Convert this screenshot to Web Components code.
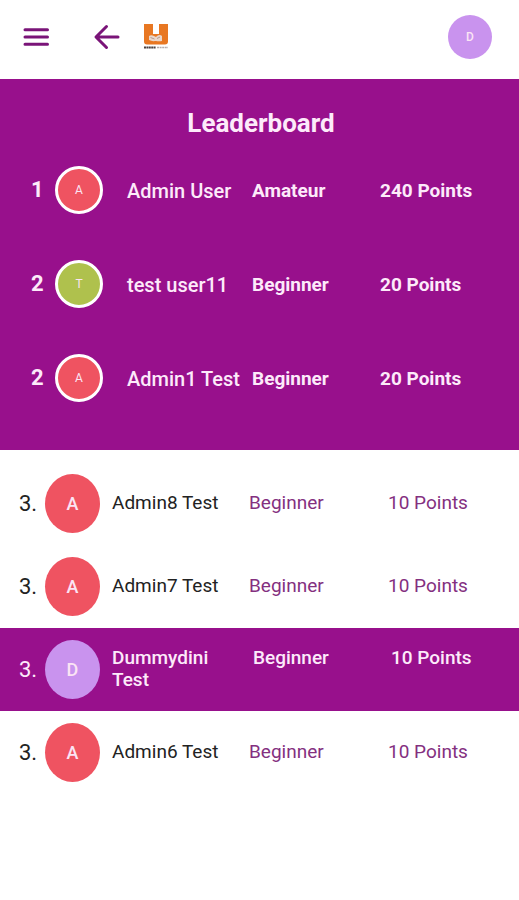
<!DOCTYPE html>
<html lang="en">
<head>
<meta charset="utf-8">
<meta name="viewport" content="width=device-width, initial-scale=1">
<title>Leaderboard</title>
<style>
    :root {
        --lb-primary: #98108c;
        --lb-icon: #7a1478;
        --lb-red: #ef5361;
        --lb-green: #afc14d;
        --lb-lilac: #c993ee;
    }
    body { margin: 0; background: #fff; color: #222; font-family: Roboto, sans-serif; }
</style>
</head>
<body>
<lb-header initial="D"></lb-header>
<main>
    <lb-podium heading="Leaderboard">
        <lb-leader rank="1" initial="A" level="Amateur" points="240">Admin User</lb-leader>
        <lb-leader rank="2" initial="T" color="green" level="Beginner" points="20">test user11</lb-leader>
        <lb-leader rank="2" initial="A" level="Beginner" points="20">Admin1 Test</lb-leader>
    </lb-podium>
    <lb-list>
        <lb-entry rank="3" initial="A" level="Beginner" points="10">Admin8 Test</lb-entry>
        <lb-entry rank="3" initial="A" level="Beginner" points="10">Admin7 Test</lb-entry>
        <lb-entry rank="3" initial="D" color="lilac" level="Beginner" points="10" current>Dummydini Test</lb-entry>
        <lb-entry rank="3" initial="A" level="Beginner" points="10">Admin6 Test</lb-entry>
    </lb-list>
</main>

<script>
class LbAvatar extends HTMLElement {
    constructor() {
        super();
        this.attachShadow({mode: 'open'});
    }

    connectedCallback() {
        const color = this.getAttribute('color') || 'red';
        this.shadowRoot.innerHTML = `
            <style>
                :host { display: flex; align-items: center; justify-content: center; box-sizing: border-box;
                    width: 44px; height: 44px; border-radius: 50%; background: var(--lb-${color});
                    color: #fbe4f4; font-size: 12px; line-height: 16px; font-weight: 500; }
                :host([size="ring"]) { width: 48px; height: 48px; border: 3px solid #fff; font-weight: 400; }
                :host([size="large"]) { width: 55px; height: 59px; font-size: 18px; line-height: 20px; }
            </style>
            <slot></slot>
        `;
    }
}

class LbHeader extends HTMLElement {
    constructor() {
        super();
        this.attachShadow({mode: 'open'});
    }

    connectedCallback() {
        this.shadowRoot.innerHTML = `
            <style>
                :host { display: block; background: #fff; }
                header { display: flex; align-items: center; box-sizing: border-box; height: 79px;
                    padding: 0 27px 5px 22px; }
                button { display: flex; padding: 0; border: 0; background: none; font: inherit; cursor: pointer; }
                .back { margin-left: 42px; }
                .logo { display: flex; margin-left: 22px; }
                .user { margin-left: auto; border-radius: 50%; }
                svg { display: block; fill: none; }
                .line { stroke: var(--lb-icon); stroke-width: 3; stroke-linecap: round; stroke-linejoin: round; }
            </style>
            <header>
                <button type="button" aria-label="Menu">
                    <svg class="line" width="28" height="28" viewBox="0 0 28 28">
                        <path d="M3 6.7h22.500M3 14h22.500M3 21.300h22.500"/>
                    </svg>
                </button>
                <button type="button" class="back" aria-label="Back">
                    <svg class="line" width="28" height="28" viewBox="0 0 28 28">
                        <path d="M26 14H5M14.500 3.500L4 14l10.500 10.500"/>
                    </svg>
                </button>
                <a class="logo" href="#" aria-label="Home">
                    <svg width="28" height="28" viewBox="0 0 28 28">
                        <path fill="#e87722" d="M2 1h9v10h6V1h9v17.500q0 3-3 3H5q-3 0-3-3z"/>
                        <path fill="#ead6ca" d="M7 13q2-1.500 5 0l2 1 1-1q3-2 5 0v5q-3 .5-6 0h-1q-3 .5-6-1z"/>
                        <path stroke="#b59a8e" d="M8.500 14.500l4 1.500M15 15.500l3-1.500"/>
                        <path stroke="#4a4040" stroke-width="2" stroke-dasharray="2 .4" d="M2 24.500h12"/>
                        <path stroke="#b3abab" stroke-width="1.500" stroke-dasharray="2 .6" d="M15 24.500h11"/>
                    </svg>
                </a>
                <button type="button" class="user" aria-label="Account">
                    <lb-avatar color="lilac">${this.getAttribute('initial')}</lb-avatar>
                </button>
            </header>
        `;
    }
}

class LbPodium extends HTMLElement {
    constructor() {
        super();
        this.attachShadow({mode: 'open'});
    }

    connectedCallback() {
        this.shadowRoot.innerHTML = `
            <style>
                :host { display: block; padding: 28px 0 25px; background: var(--lb-primary); color: #fdeafa; }
                h1 { margin: 0 0 4px; padding-left: 3px; font-size: 26px; line-height: 32px; font-weight: 700;
                    text-align: center; }
            </style>
            <h1>${this.getAttribute('heading')}</h1>
            <div role="list"><slot></slot></div>
        `;
    }
}

class LbLeader extends HTMLElement {
    constructor() {
        super();
        this.attachShadow({mode: 'open'});
    }

    connectedCallback() {
        this.setAttribute('role', 'listitem');
        this.shadowRoot.innerHTML = `
            <style>
                :host { display: grid; grid-template-columns: 24px 72px 125fr 128fr 139fr; align-items: center;
                    height: 94px; padding-left: 31px; font-size: 20px; line-height: 24px; white-space: nowrap; }
                .rank { font-size: 22px; font-weight: 700; }
                .name, .stat { padding-top: 2px; font-weight: 500; }
                .name { padding-right: 12px; }
                .stat { font-size: 19px; font-weight: 700; }
            </style>
            <span class="rank">${this.getAttribute('rank')}</span>
            <lb-avatar size="ring" color="${this.getAttribute('color') || 'red'}">${this.getAttribute('initial')}</lb-avatar>
            <span class="name"><slot></slot></span>
            <span class="stat">${this.getAttribute('level')}</span>
            <span class="stat">${this.getAttribute('points')} Points</span>
        `;
    }
}

class LbList extends HTMLElement {
    constructor() {
        super();
        this.attachShadow({mode: 'open'});
    }

    connectedCallback() {
        this.setAttribute('role', 'list');
        this.shadowRoot.innerHTML = `
            <style>
                :host { display: block; padding: 12px 0; }
            </style>
            <slot></slot>
        `;
    }
}

class LbEntry extends HTMLElement {
    constructor() {
        super();
        this.attachShadow({mode: 'open'});
    }

    connectedCallback() {
        this.setAttribute('role', 'listitem');
        this.shadowRoot.innerHTML = `
            <style>
                :host { display: flex; align-items: center; padding: 12px 0 12px 19px;
                    font-size: 19px; line-height: 22px; }
                .rank { width: 26px; font-size: 22px; }
                .info { flex: 1; display: grid; grid-template-columns: 137fr 139fr 131fr; margin-left: 12px;
                    padding-bottom: 1px; }
                .name { padding-right: 24px; }
                .stat { color: #84307f; }
                :host([current]) { background: var(--lb-primary); color: #fdeafa; }
                :host([current]) .info { grid-template-columns: 141fr 138fr 128fr; font-weight: 500; }
                :host([current]) .stat { color: inherit; }
            </style>
            <span class="rank">${this.getAttribute('rank')}.</span>
            <lb-avatar size="large" color="${this.getAttribute('color') || 'red'}">${this.getAttribute('initial')}</lb-avatar>
            <div class="info">
                <span class="name"><slot></slot></span>
                <span class="stat">${this.getAttribute('level')}</span>
                <span class="stat">${this.getAttribute('points')} Points</span>
            </div>
        `;
    }
}

customElements.define('lb-avatar', LbAvatar);
customElements.define('lb-header', LbHeader);
customElements.define('lb-podium', LbPodium);
customElements.define('lb-leader', LbLeader);
customElements.define('lb-list', LbList);
customElements.define('lb-entry', LbEntry);
</script>
</body>
</html>
